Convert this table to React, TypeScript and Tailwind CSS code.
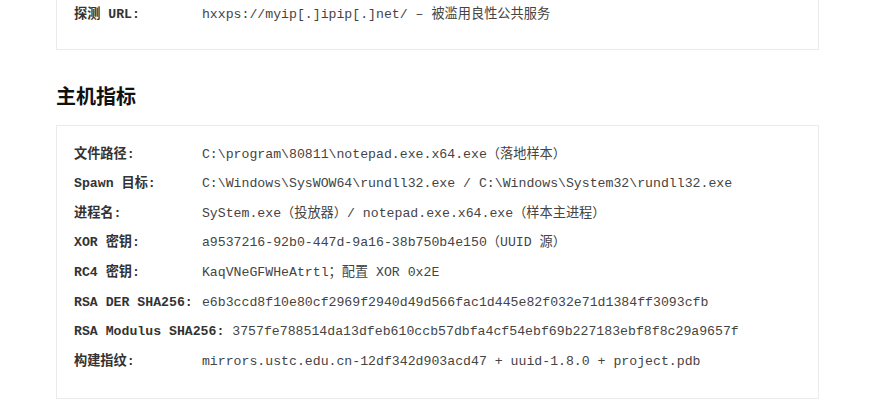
const mono = "font-['Liberation_Mono','Noto_Sans_CJK_SC',monospace]";

type Row = { label: string; value: string };

const rows: Row[] = [
  { label: "文件路径:", value: "C:\\program\\80811\\notepad.exe.x64.exe（落地样本）" },
  {
    label: "Spawn 目标:",
    value: "C:\\Windows\\SysWOW64\\rundll32.exe / C:\\Windows\\System32\\rundll32.exe",
  },
  { label: "进程名:", value: "SyStem.exe（投放器）/ notepad.exe.x64.exe（样本主进程）" },
  { label: "XOR 密钥:", value: "a9537216-92b0-447d-9a16-38b750b4e150（UUID 源）" },
  { label: "RC4 密钥:", value: "KaqVNeGFWHeAtrtl；配置 XOR 0x2E" },
  {
    label: "RSA DER SHA256:",
    value: "e6b3ccd8f10e80cf2969f2940d49d566fac1d445e82f032e71d1384ff3093cfb",
  },
  {
    label: "RSA Modulus SHA256:",
    value: "3757fe788514da13dfeb610ccb57dbfa4cf54ebf69b227183ebf8f8c29a9657f",
  },
  { label: "构建指纹:", value: "mirrors.ustc.edu.cn-12df342d903acd47 + uuid-1.8.0 + project.pdb" },
];

const Line = ({ label, value }: Row) => (
  <div className={`${mono} text-[13.2px] h-[29.6px] leading-[29.6px] whitespace-nowrap`}>
    <strong className="inline-block min-w-[120px] font-bold text-[#333]">{label}</strong>{" "}
    <span className="text-[#444]">{value}</span>
  </div>
);

export default function App() {
  return (
    <div className="w-[875px] h-[407px] overflow-hidden bg-white">
      <div className="ml-[56px] w-[763px]">
        <div className="-mt-[40px] border border-[#ebebeb] border-t-0 pl-[17px] pt-[40px] pb-[19px]">
          <Line label="探测 URL:" value="hxxps://myip[.]ipip[.]net/ – 被滥用良性公共服务" />
        </div>
        <h2 className="mt-[32px] mb-[15px] h-[28px] leading-[28px] text-[20px] font-bold text-[#111] font-['Noto_Sans_CJK_SC',sans-serif]">
          主机指标
        </h2>
        <div className="border border-[#ebebeb] pl-[17px] pt-[14px] pb-[22px]">
          {rows.map((r) => (
            <Line key={r.label} {...r} />
          ))}
        </div>
      </div>
    </div>
  );
}
